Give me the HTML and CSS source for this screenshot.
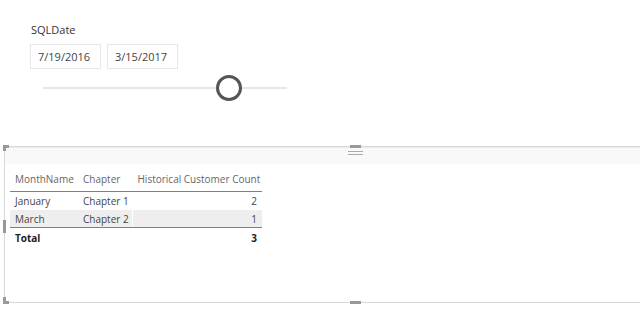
FILE: index.html
```html
<!DOCTYPE html>
<html lang="en">

<head>
  <meta charset="UTF-8" />
  <title>SQLDate report</title>
  <link rel="stylesheet" href="styles.css">
</head>

<body>

  <!-- Date slicer -->
  <section class="slicer">
    <div class="slicer-title">SQLDate</div>
    <div class="date-boxes">
      <div class="date-box">7/19/2016</div>
      <div class="date-box">3/15/2017</div>
    </div>
    <div class="slider">
      <div class="slider-track"></div>
      <div class="slider-knob"></div>
    </div>
  </section>

  <!-- Table visual -->
  <section class="visual">
    <span class="handle corner-tl"></span>
    <span class="handle mid-top"></span>
    <span class="grip"></span>
    <span class="handle mid-left"></span>
    <span class="handle corner-bl"></span>
    <span class="handle mid-bottom"></span>

    <div class="visual-header"></div>

    <table class="data-table">
      <colgroup>
        <col class="col-month">
        <col class="col-chapter">
        <col class="col-count">
      </colgroup>
      <thead>
        <tr>
          <th>MonthName</th>
          <th>Chapter</th>
          <th class="count">Historical Customer Count</th>
        </tr>
      </thead>
      <tbody>
        <tr>
          <td>January</td>
          <td>Chapter 1</td>
          <td class="num">2</td>
        </tr>
        <tr class="alt">
          <td>March</td>
          <td>Chapter 2</td>
          <td class="num">1</td>
        </tr>
      </tbody>
      <tfoot>
        <tr>
          <td>Total</td>
          <td></td>
          <td class="num">3</td>
        </tr>
      </tfoot>
    </table>
  </section>

</body>

</html>
```

FILE: styles.css
```css
body {
  margin: 0;
  padding: 0;
  background: #fff;
  font-family: 'Open Sans', 'Noto Sans', sans-serif;
  color: #333;
  overflow: hidden;
  width: 640px;
  height: 326px;
}

/* Slicer */
.slicer {
  padding: 22px 0 0 30px;
  height: 124px;
  box-sizing: border-box;
}

.slicer-title {
  font-size: 11px;
  line-height: 16px;
  color: #333;
  padding-left: 1px;
}

.date-boxes {
  display: flex;
  gap: 6px;
  margin-top: 6px;
}

.date-box {
  width: 71px;
  height: 25px;
  box-sizing: border-box;
  border: 1px solid #e8e8e8;
  font-size: 11px;
  line-height: 23px;
  padding-left: 7px;
  color: #444;
}

.slider {
  position: relative;
  width: 244px;
  height: 26px;
  margin: 6px 0 0 13px;
}

.slider-track {
  position: absolute;
  left: 0;
  right: 0;
  top: 12px;
  height: 2px;
  background: #e6e6e6;
}

.slider-knob {
  position: absolute;
  left: 173px;
  top: 0;
  width: 26px;
  height: 26px;
  box-sizing: border-box;
  border: 3px solid #555;
  border-radius: 50%;
  background: #fff;
}

/* Table visual */
.visual {
  position: relative;
  margin: 22px 0 0 4px;
  width: 660px;
  height: 157px;
  box-sizing: border-box;
  border: 1px solid #d8d8d8;
}

.visual-header {
  height: 16px;
  background: #f9f9f9;
  border-top: 1px solid #ececec;
}

.handle {
  position: absolute;
  background: #999;
}

.corner-tl {
  left: -2px;
  top: -2px;
  width: 6px;
  height: 6px;
  background: none;
  border-left: 3px solid #999;
  border-top: 3px solid #999;
  box-sizing: border-box;
}

.corner-bl {
  left: -2px;
  bottom: -2px;
  width: 6px;
  height: 7px;
  background: none;
  border-left: 3px solid #999;
  border-bottom: 3px solid #999;
  box-sizing: border-box;
}

.mid-top {
  left: 345px;
  top: -2px;
  width: 11px;
  height: 3px;
}

.mid-bottom {
  left: 345px;
  bottom: -2px;
  width: 11px;
  height: 3px;
}

.mid-left {
  left: -2px;
  top: 73px;
  width: 3px;
  height: 13px;
}

.grip {
  position: absolute;
  left: 343px;
  top: 4px;
  width: 15px;
  height: 2px;
  border-top: 1px solid #aaa;
  border-bottom: 1px solid #aaa;
}

.data-table {
  border-collapse: collapse;
  table-layout: fixed;
  margin: 5px 0 0 5px;
  font-size: 10px;
  width: 252px;
}

.col-month {
  width: 68px;
}

.col-chapter {
  width: 54px;
}

.col-count {
  width: 130px;
}

.data-table th {
  font-weight: normal;
  color: #666;
  text-align: left;
  height: 19px;
  padding: 0 4px 3px 5px;
  border-bottom: 1px solid #01b8aa;
  white-space: nowrap;
}

.data-table td {
  height: 18px;
  padding: 0 5px;
  color: #444;
  white-space: nowrap;
}

.data-table th.count,
.data-table td.num {
  border-left: 1px solid #fff;
}

.data-table td.num {
  text-align: right;
}

.data-table tr.alt td {
  background: #eeeeee;
  border-bottom: 1px solid #01b8aa;
  height: 17px;
}

.data-table tfoot td {
  font-weight: bold;
  color: #222;
  height: 19px;
}
```
